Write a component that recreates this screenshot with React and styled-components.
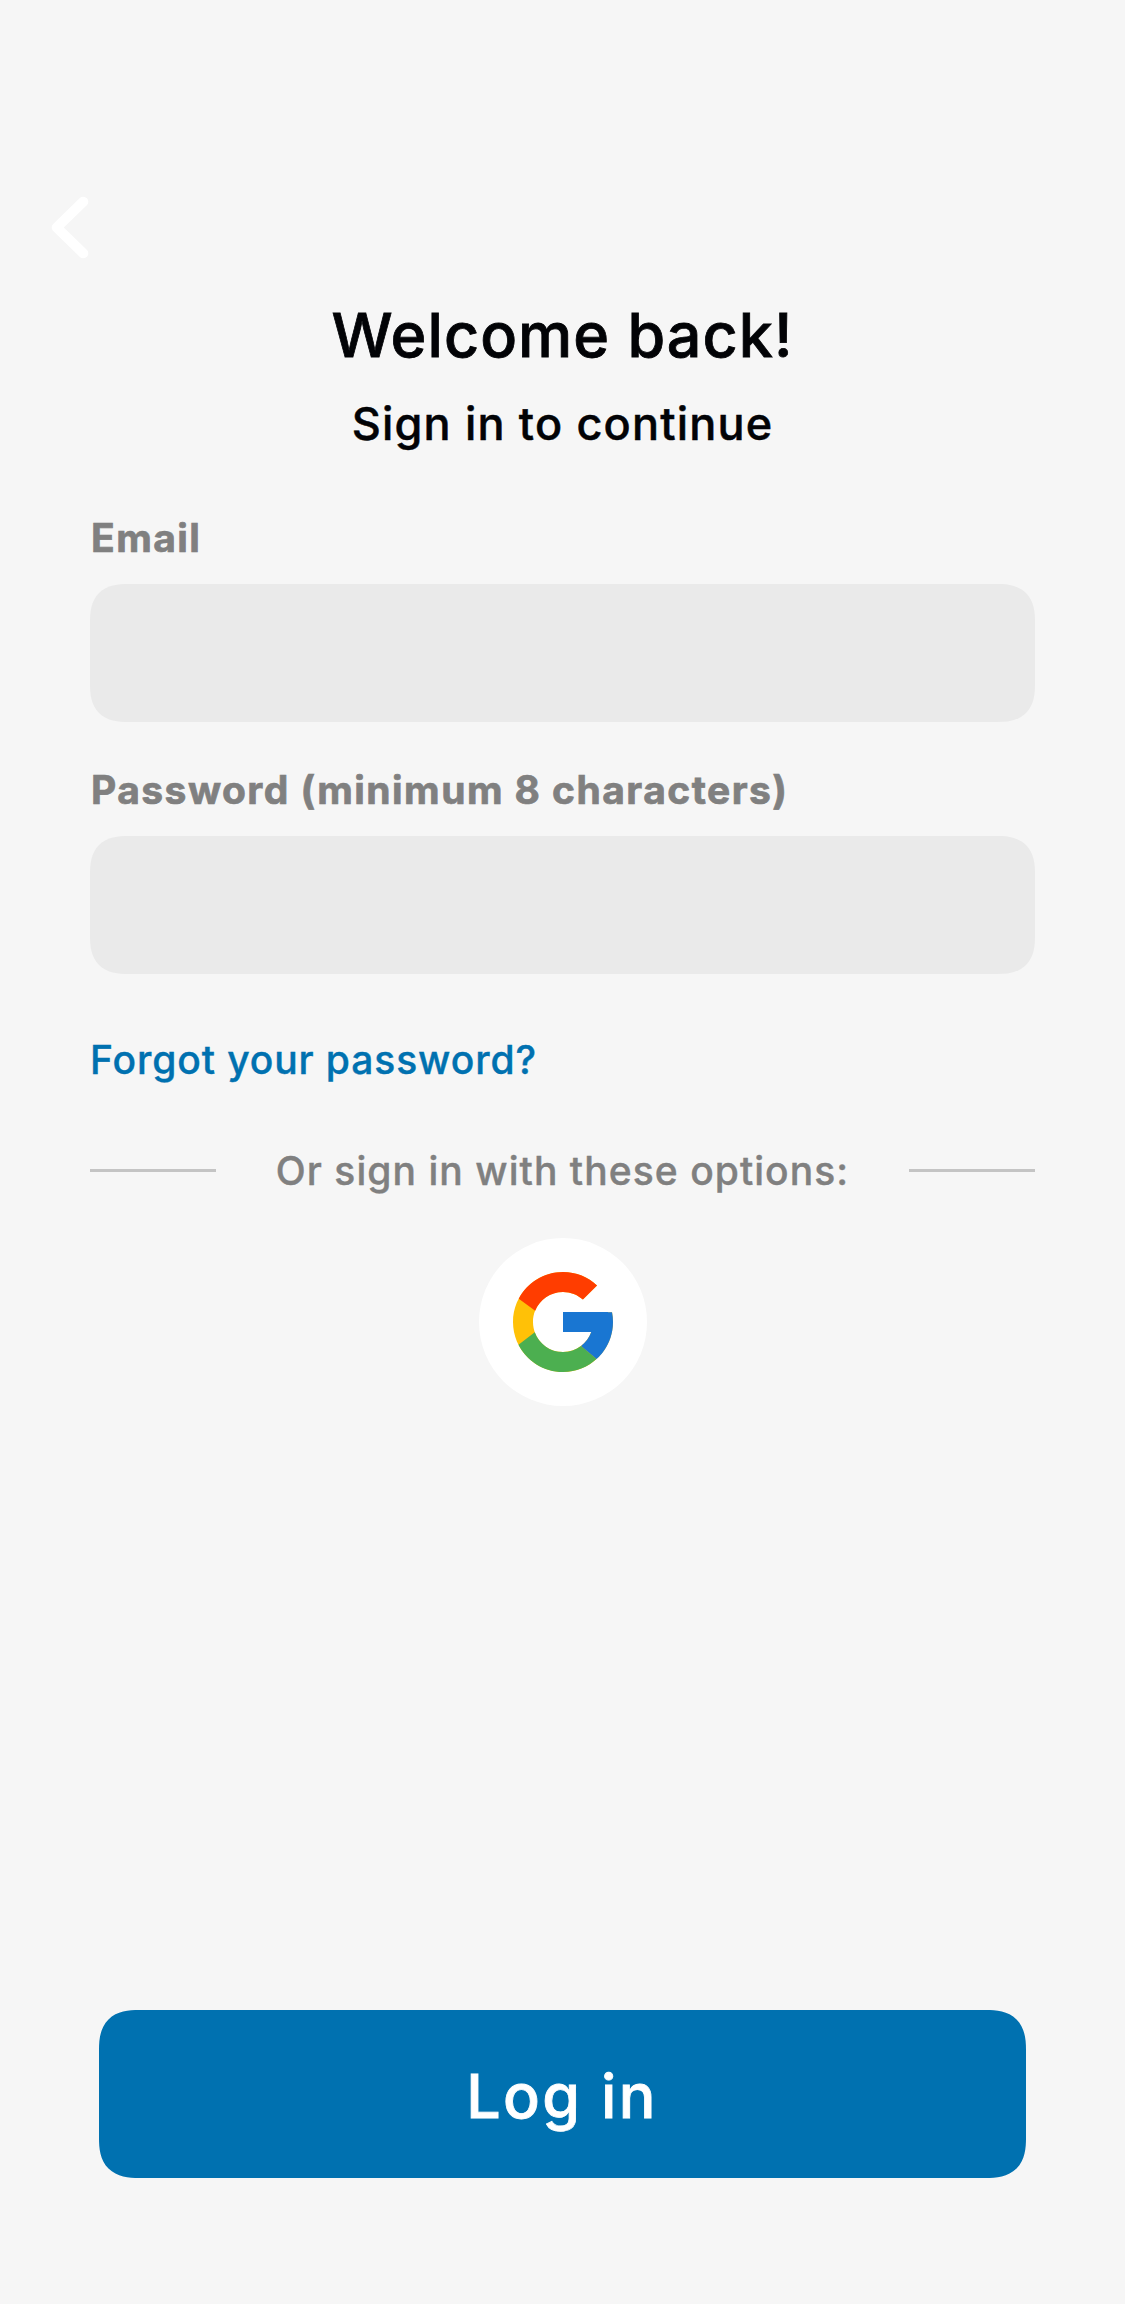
import React from "react";
import styled, { createGlobalStyle } from "styled-components";
import { FcGoogle } from "react-icons/fc";

const GlobalStyle = createGlobalStyle`
  *, *::before, *::after { box-sizing: border-box; }
  body {
    margin: 0;
    background: #f6f6f6;
    font-family: Inter, "Liberation Sans", sans-serif;
  }
  button, input { font-family: inherit; }
`;

const Screen = styled.main`
  display: flex;
  flex-direction: column;
  width: 1125px;
  min-height: 2304px;
  padding: 196px 90px 126px;
  background: #f6f6f6;
`;

const BackButton = styled.button`
  display: flex;
  align-self: flex-start;
  margin: 0 0 0 -40px;
  padding: 0;
  border: 0;
  background: none;
`;

const Header = styled.header`
  display: flex;
  flex-direction: column;
  align-items: center;
  gap: 21px;
  margin-top: 35px;
`;

const Title = styled.h1`
  margin: 0;
  color: #020306;
  font-size: 61px;
  font-weight: 500;
  line-height: 80px;
  letter-spacing: 1.05px;
  -webkit-text-stroke: 0.8px currentColor;
`;

const Subtitle = styled.p`
  margin: 0;
  color: #020306;
  font-size: 45px;
  font-weight: 500;
  line-height: 56px;
  letter-spacing: 1.18px;
  -webkit-text-stroke: 0.5px currentColor;
`;

const Form = styled.form`
  display: flex;
  flex: 1;
  flex-direction: column;
  margin-top: 62px;
`;

const Fields = styled.div`
  display: flex;
  flex-direction: column;
  gap: 44px;
`;

const Field = styled.label`
  display: flex;
  flex-direction: column;
  gap: 22px;
`;

const FieldLabel = styled.span`
  padding-left: 1px;
  color: #808080;
  font-size: 39px;
  font-weight: 700;
  line-height: 48px;
  letter-spacing: 1.45px;
  -webkit-text-stroke: 0.7px currentColor;
`;

const Input = styled.input`
  height: 138px;
  padding: 0 36px;
  border: 0;
  outline: 0;
  border-radius: 38px;
  corner-shape: superellipse(1.36);
  background: #eaeaea;
  color: #020306;
  font-size: 42px;
`;

const ForgotLink = styled.a`
  align-self: flex-start;
  margin-top: 62px;
  color: #0071b0;
  font-size: 39px;
  font-weight: 500;
  line-height: 48px;
  letter-spacing: 0.9px;
  text-decoration: none;
  -webkit-text-stroke: 0.4px currentColor;
`;

const Divider = styled.div`
  display: flex;
  align-items: flex-start;
  justify-content: space-between;
  margin-top: 63px;
`;

const Rule = styled.span`
  width: 126px;
  height: 3px;
  margin-top: 22px;
  background: #c4c4c4;
`;

const DividerText = styled.span`
  color: #808080;
  font-size: 39px;
  font-weight: 500;
  line-height: 48px;
  letter-spacing: 1.05px;
  -webkit-text-stroke: 0.4px currentColor;
`;

const SocialButton = styled.button`
  display: flex;
  align-items: center;
  justify-content: center;
  align-self: center;
  width: 168px;
  height: 168px;
  margin: 43px 0 0 1px;
  padding: 0;
  border: 0;
  border-radius: 50%;
  background: #fff;
`;

const SubmitButton = styled.button`
  height: 168px;
  margin: auto 9px 0;
  padding: 4px 1px 0 0;
  border: 0;
  border-radius: 40px;
  corner-shape: superellipse(1.36);
  background: #0071b0;
  color: #fff;
  font-size: 61px;
  font-weight: 500;
  line-height: 80px;
  letter-spacing: 2.35px;
  -webkit-text-stroke: 0.8px currentColor;
`;

function LabeledField({ label, type }) {
  return (
    <Field>
      <FieldLabel>{label}</FieldLabel>
      <Input type={type} />
    </Field>
  );
}

export default function App() {
  return (
    <>
      <GlobalStyle />
      <Screen>
        <BackButton type="button" aria-label="Back">
          <svg width="40" height="64" viewBox="0 0 40 64" fill="none">
            <path
              d="M33.3 5.7L6.7 31.5L33.3 57.3"
              stroke="#fff"
              strokeWidth="10"
              strokeLinecap="round"
              strokeLinejoin="round"
            />
          </svg>
        </BackButton>
        <Header>
          <Title>Welcome back!</Title>
          <Subtitle>Sign in to continue</Subtitle>
        </Header>
        <Form>
          <Fields>
            <LabeledField label="Email" type="email" />
            <LabeledField label="Password (minimum 8 characters)" type="password" />
          </Fields>
          <ForgotLink href="#">Forgot your password?</ForgotLink>
          <Divider>
            <Rule />
            <DividerText>Or sign in with these options:</DividerText>
            <Rule />
          </Divider>
          <SocialButton type="button" aria-label="Google">
            <FcGoogle size={120} />
          </SocialButton>
          <SubmitButton type="button">Log in</SubmitButton>
        </Form>
      </Screen>
    </>
  );
}
